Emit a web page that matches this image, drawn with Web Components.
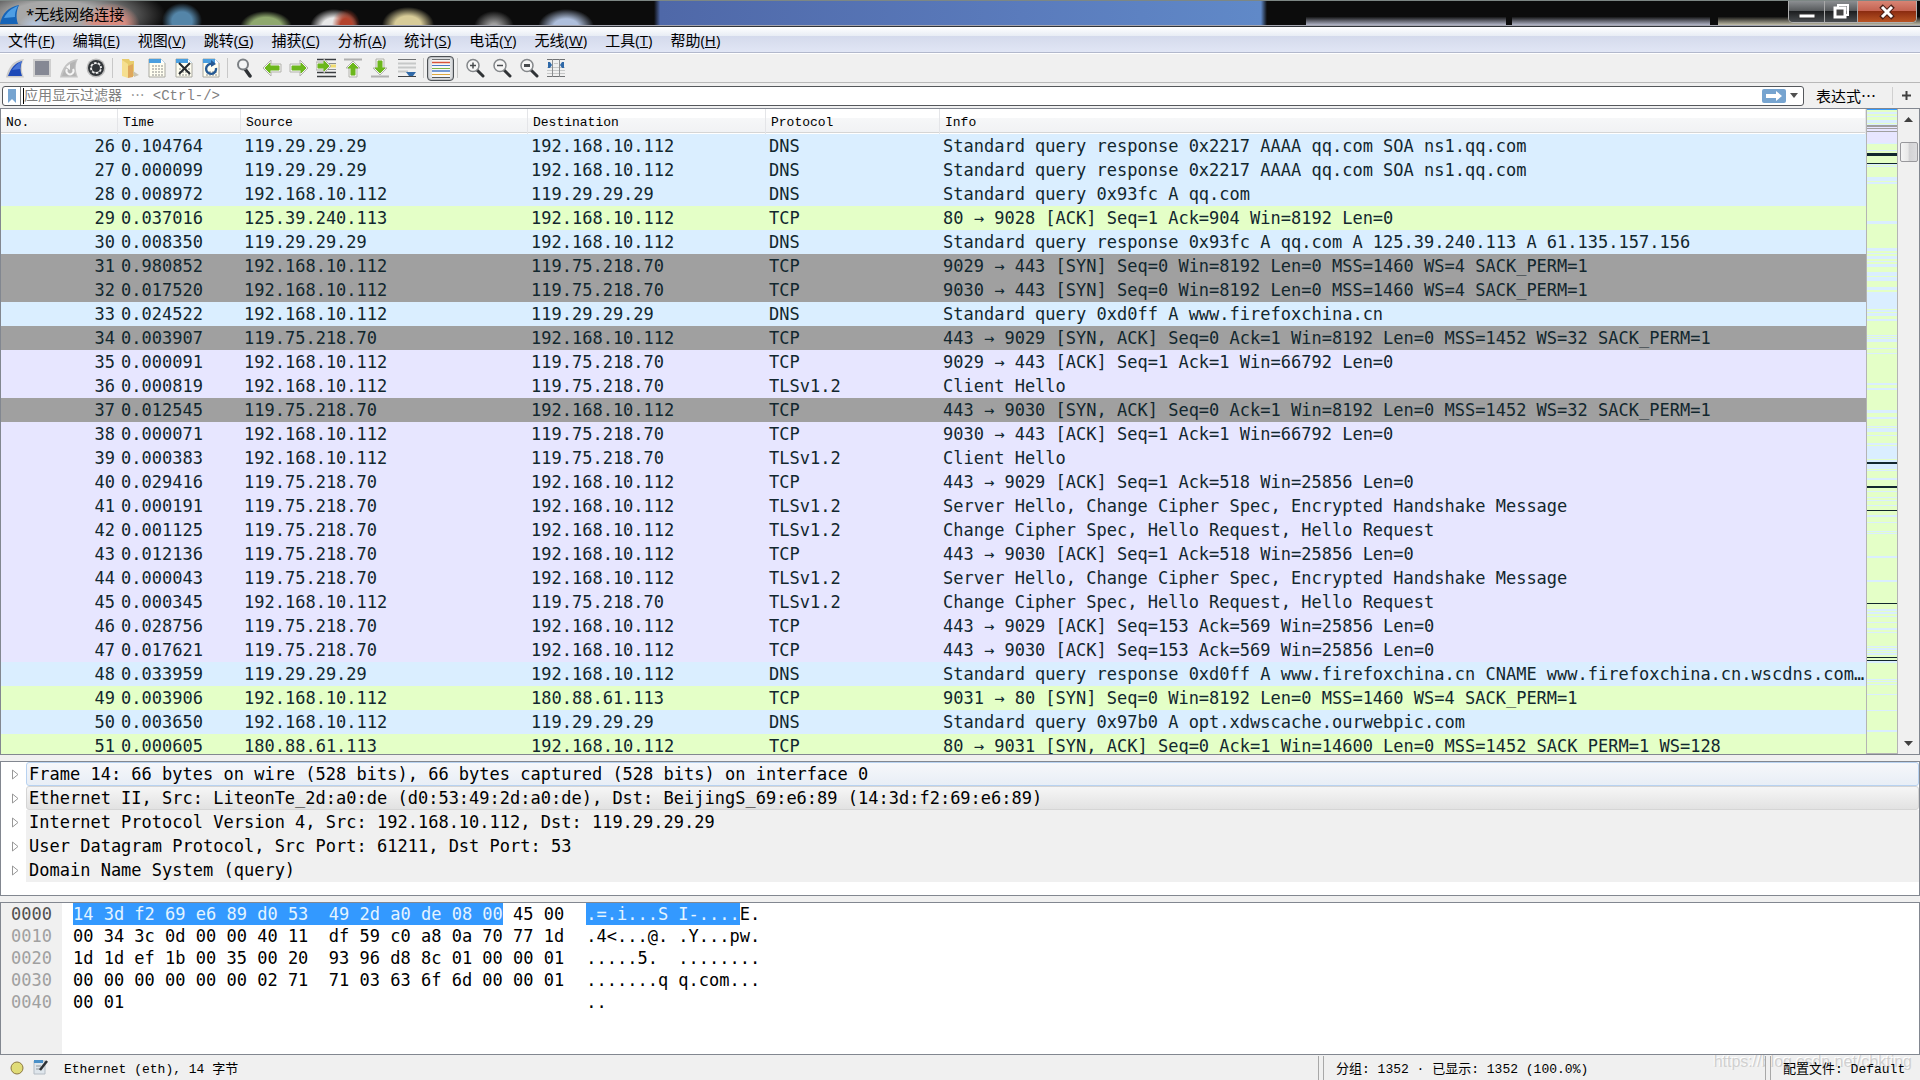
<!DOCTYPE html>
<html lang="zh-CN">
<head>
<meta charset="utf-8">
<title>*无线网络连接</title>
<style>
    html, body {
        height: 100%;
        margin: 0;
    }
    body {
        overflow: hidden;
        background: #f0f0f0;
        color: #000;
        --ui: "Open Sans", "Noto Sans CJK SC", sans-serif;
        --fixed: "Liberation Mono", "Noto Sans CJK SC", monospace;
        --data: "DejaVu Sans Mono", "Noto Sans CJK SC", monospace;
        --edge: #828790;
    }
</style>
</head>
<body>
<app-window>
    <title-bar slot="title">*无线网络连接</title-bar>
    <menu-bar slot="menu"></menu-bar>
    <tool-bar slot="tools"></tool-bar>
    <filter-bar slot="filter"></filter-bar>
    <packet-list></packet-list>
    <packet-details></packet-details>
    <packet-bytes></packet-bytes>
    <status-bar slot="status"></status-bar>
</app-window>

<script>
const ICONS = {
    start: `<path d="M1 19.500C3 10 8 2 19 1c-3 5-3 12 0 18.500z" fill="#c9c9c9"/><path d="M3 18C6 10 10 5 17 3c-2 5-2 10 0 15z" fill="#1c49b8"/><path d="M7 12c3-4 6-7 10-9-2 4-2 6-2 8z" fill="#4876d8"/>`,
    stop: `<path d="M1 1h18v18H1z" fill="#cfcfcf"/><path d="M3 3h14v14H3z" fill="#858894"/>`,
    restart: `<path d="M1 19.500C3 10 8 2 19 1c-3 5-3 12 0 18.500z" fill="#c3c3c3"/><path d="M3 18C6 10 10 5 17 3c-2 5-2 10 0 15z" fill="#b4b4b4"/><path d="M8 11a3.500 3.500 0 1 0 6 0" fill="none" stroke="#f4f4f4" stroke-width="2"/><path d="M11 6v6l-4-3z" fill="#f4f4f4"/>`,
    options: `<circle cx="10" cy="10" r="9.500" fill="#bdbdbd"/><circle cx="10" cy="10" r="8" fill="#303438"/><circle cx="10" cy="10" r="5" fill="none" stroke="#eee" stroke-width="2"/><circle cx="10" cy="10" r="5.500" fill="none" stroke="#303438" stroke-width="2" stroke-dasharray="1.500 2.800"/><circle cx="10" cy="10" r="2.500" fill="#303438"/>`,
    open: `<path d="M2 1h7l1 2h4v15H2z" fill="#e8cc6c"/><path d="M2 18V2l6 4v14z" fill="#f5df90"/><path d="M8 20V8l5-2v13z" fill="#dfa75b"/><path d="M13 13l6 4-5 2z" fill="#c9c2b0"/>`,
    save: `<path d="M2 1h12l4 4v14H2z" fill="#fffef0" stroke="#a8a8a0"/><path d="M2 1h12l4 4H2z" fill="#4a9fe0"/><path d="M14 1v4h4z" fill="#fff"/><path d="M5 8h11M5 11h11M5 14h11M5 17h11" stroke="#c4c4bc" stroke-width="2" stroke-dasharray="2 1"/>`,
    close: `<path d="M2 1h12l4 4v14H2z" fill="#fffef0" stroke="#a8a8a0"/><path d="M2 1h12l4 4H2z" fill="#4a9fe0"/><path d="M14 1v4h4z" fill="#fff"/><path d="M5 11h11M5 14h11M5 17h11" stroke="#c4c4bc" stroke-width="2" stroke-dasharray="2 1"/><path d="M5 5l11 11M16 5L5 16" stroke="#262a2e" stroke-width="2"/>`,
    reload: `<path d="M2 1h12l4 4v14H2z" fill="#fffef0" stroke="#a8a8a0"/><path d="M2 1h12l4 4H2z" fill="#4a9fe0"/><path d="M14 1v4h4z" fill="#fff"/><path d="M5 14h11M5 17h11" stroke="#c4c4bc" stroke-width="2" stroke-dasharray="2 1"/><path d="M15 10a5 5 0 1 1-4-4" fill="none" stroke="#255a94" stroke-width="2.400"/><path d="M10 2l5 4-5 3z" fill="#255a94"/>`,
    find: `<path d="M10 11l5 7" stroke="#2f3235" stroke-width="3.500" stroke-linecap="round"/><circle cx="8" cy="6.500" r="5" fill="#f4f5f6" stroke="#7c8084" stroke-width="2"/>`,
    back: `<path d="M1 10l8-8v4h10v8H9v4z" fill="#f2f2f0" stroke="#b4b4ae"/><path d="M3 10l5-5v3h9v4H8v3z" fill="#6cb71c" stroke="#6cb71c"/>`,
    forward: `<path d="M19 10l-8-8v4H1v8h10v4z" fill="#f2f2f0" stroke="#b4b4ae"/><path d="M17 10l-5-5v3H3v4h9v3z" fill="#6cb71c" stroke="#6cb71c"/>`,
    goto: `<path d="M1 1.500h19M1 14.500h19M1 18.500h19" stroke="#3a3d40" stroke-width="1.500"/><path d="M10 5.500h10M12 11.500h8" stroke="#8c8e90"/><path d="M12 8h8" stroke="#f0dc70" stroke-width="3"/><path d="M15 8L8 1v3H0v8h8v3z" fill="#e8e8e4" stroke="#b4b4ae"/><path d="M13 8L8 3v3H2v4h6v3z" fill="#6cb71c" stroke="#6cb71c"/>`,
    first: `<path d="M1 1.500h18" stroke="#b0b0b0" stroke-width="2"/><path d="M10 3l7 7h-3v9H6v-9H3z" fill="#f2f2f0" stroke="#b4b4ae"/><path d="M10 5l5 5h-3v7H8v-7H5z" fill="#6cb71c" stroke="#6cb71c"/>`,
    last: `<path d="M1 18.500h18" stroke="#b0b0b0" stroke-width="2"/><path d="M10 17l7-7h-3V1H6v9H3z" fill="#f2f2f0" stroke="#b4b4ae"/><path d="M10 15l5-5h-3V3H8v7H5z" fill="#6cb71c" stroke="#6cb71c"/>`,
    autoscroll: `<path d="M1 1.500h18" stroke="#707274"/><path d="M1 5.500h18M1 9.500h18M1 13.500h10" stroke="#c6c8c8" stroke-width="2"/><path d="M1 18.500h18" stroke="#404346"/><path d="M9 14h10l-3 4h-4z" fill="#2f69a8"/>`,
    colorize: `<path d="M1 1h18v18H1z" fill="#f8f8f8"/><path d="M1 1.500h18" stroke="#707274"/><path d="M1 4.500h18" stroke="#d8553c" stroke-width="1.500"/><path d="M1 7.500h18" stroke="#4a7bc8"/><path d="M1 10.500h18" stroke="#7eb548"/><path d="M1 13h18" stroke="#4a7bc8" stroke-width="1.500"/><path d="M1 16.500h18" stroke="#e0a83c"/><path d="M1 19.500h18" stroke="#55585a"/>`,
    zoomin: `<path d="M12 12l6 6" stroke="#303336" stroke-width="3" stroke-linecap="round"/><circle cx="8" cy="7.500" r="6" fill="#f6f6f6" stroke="#84878a" stroke-width="1.500"/><path d="M5 7.500h6M8 4.500v6" stroke="#484b4e" stroke-width="1.500"/>`,
    zoomout: `<path d="M12 12l6 6" stroke="#303336" stroke-width="3" stroke-linecap="round"/><circle cx="8" cy="7.500" r="6" fill="#f6f6f6" stroke="#84878a" stroke-width="1.500"/><path d="M5 7.500h6" stroke="#484b4e" stroke-width="1.500"/>`,
    zoomreset: `<path d="M12 12l6 6" stroke="#303336" stroke-width="3" stroke-linecap="round"/><circle cx="8" cy="7.500" r="6" fill="#f6f6f6" stroke="#84878a" stroke-width="1.500"/><path d="M5 7.500h6" stroke="#484b4e" stroke-width="3"/>`,
    resize: `<path d="M1 1.500h18M1 18.500h18" stroke="#707274"/><path d="M1 9.500h18M1 12.500h18M1 15.500h18M8 5.500h4" stroke="#c6c8c8"/><path d="M6.500 1v18M13.500 1v18" stroke="#8c8e90"/><path d="M2 4h2l2 3-2 3H2zM18 4h-2l-2 3 2 3h2z" fill="#2f69a8"/>`
};

class AppWindow extends HTMLElement {
    constructor() {
        super();
        this.attachShadow({ mode: 'open' }).innerHTML = `
        <style>
            :host {
                display: flex;
                flex-direction: column;
                height: 100vh;
                font: 15px/20px var(--ui);
            }
            main {
                flex: 1;
                min-height: 0;
                display: flex;
                flex-direction: column;
                gap: 6px;
            }
        </style>
        <slot name="title"></slot>
        <slot name="menu"></slot>
        <slot name="tools"></slot>
        <slot name="filter"></slot>
        <main><slot></slot></main>
        <slot name="status"></slot>
        `;
    }
}

class TitleBar extends HTMLElement {
    constructor() {
        super();
        this.attachShadow({ mode: 'open' }).innerHTML = `
        <style>
            :host {
                display: flex;
                justify-content: space-between;
                align-items: flex-start;
                box-sizing: border-box;
                height: 27px;
                border-top: 1px solid #7d8784;
                border-bottom: 1px solid #30343a;
                box-shadow: inset 0 -1px #a5a6b0;
                background:
                    radial-gradient(ellipse 18px 14px at 36px 26px, #b9cdea, transparent),
                    radial-gradient(ellipse 30px 22px at 110px 24px, #d98c80 50%, transparent),
                    radial-gradient(ellipse 110px 34px at 56px 14px, #a8a8a8 40%, transparent),
                    radial-gradient(ellipse 20px 18px at 182px 20px, #5485a8 50%, transparent),
                    radial-gradient(ellipse 26px 16px at 266px 26px, #8fa86e 60%, transparent),
                    radial-gradient(ellipse 14px 16px at 346px 24px, #b4432c 40%, transparent),
                    radial-gradient(ellipse 24px 18px at 334px 26px, #e8e8e8 50%, transparent),
                    radial-gradient(ellipse 26px 18px at 408px 24px, #d8cc98 50%, transparent),
                    radial-gradient(ellipse 20px 16px at 494px 26px, #a0a0a0 20%, transparent),
                    radial-gradient(ellipse 28px 18px at 566px 26px, #aebfdc 45%, transparent),
                    linear-gradient(90deg, transparent, #4f68a8 1%, #5a7bbc 60%, #6089c8 99%, transparent) 654px 0 / 613px 100% no-repeat,
                    linear-gradient(transparent 62%, #c4c8dc) 1306px 0 / 200px 100% no-repeat,
                    linear-gradient(transparent 62%, #c4c8dc) 1512px 0 / 198px 100% no-repeat,
                    linear-gradient(transparent 62%, #d8d4bc) 1718px 0 / 202px 100% no-repeat,
                    #0c0c0c;
            }
            .caption {
                display: flex;
                align-items: center;
                gap: 6px;
                height: 25px;
            }
            svg {
                display: block;
            }
            .buttons {
                display: flex;
                margin-right: 3px;
                border: 1px solid #b0b0b0;
                border-top: 0;
                border-radius: 0 0 5px 5px;
                overflow: hidden;
            }
            button {
                width: 36px;
                height: 21px;
                padding: 0;
                border: 0;
                border-right: 1px solid #a8a8a8;
                background: linear-gradient(#8c8f92, #55585a 48%, #1c1e20 50%, #4a4d50);
            }
            button:nth-child(2) {
                width: 33px;
            }
            button:last-child {
                width: 58px;
                border-right: 0;
                background: linear-gradient(#d88474, #c46250 48%, #8c2c10 50%, #b85424);
            }
            button svg {
                margin: auto;
            }
        </style>
        <div class="caption">
            <svg width="20" height="20" viewBox="0 0 20 20"><path d="M0 20C2 10 8 3 19 1c-3 7-3 13-1 19z" fill="#1664b8"/><path d="M4 14C7 8 12 4 18 2c-3 5-3 8-3 11z" fill="#4f9ee4"/></svg>
            <slot></slot>
        </div>
        <div class="buttons">
            <button aria-label="最小化"><svg width="20" height="16"><path d="M2 10h16v4H2z" fill="#fff" stroke="#333"/></svg></button>
            <button aria-label="还原"><svg width="20" height="18"><path d="M7 2h10v10H7z" fill="none" stroke="#fff" stroke-width="2"/><path d="M4 5h10v9H4z" fill="#444" stroke="#fff" stroke-width="3"/></svg></button>
            <button aria-label="关闭"><svg width="20" height="16"><path d="M4 2l12 12M16 2L4 14" stroke="#4a2018" stroke-width="5"/><path d="M5 3l10 10M15 3L5 13" stroke="#fff" stroke-width="3"/></svg></button>
        </div>
        `;
    }
}

class MenuBar extends HTMLElement {
    connectedCallback() {
        const items = ['文件F', '编辑E', '视图V', '跳转G', '捕获C', '分析A', '统计S', '电话Y', '无线W', '工具T', '帮助H'];
        this.attachShadow({ mode: 'open' }).innerHTML = `
        <style>
            :host {
                display: block;
                border-bottom: 1px solid #b2b8cc;
                background: linear-gradient(#fff, #e8edf5 35%, #d4daec 36%, #e1e6f5);
            }
            nav {
                display: flex;
                gap: 2px;
                height: 25px;
            }
            button {
                padding: 0 8px;
                border: 0;
                background: none;
                font: inherit;
                color: inherit;
            }
        </style>
        <nav>${items.map(i => `<button>${i.slice(0, 2)}(<u>${i[2]}</u>)</button>`).join('')}</nav>
        `;
    }
}

class ToolButton extends HTMLElement {
    connectedCallback() {
        this.attachShadow({ mode: 'open' }).innerHTML = `
        <style>
            :host {
                display: block;
            }
            button {
                display: flex;
                align-items: center;
                justify-content: center;
                box-sizing: border-box;
                width: 27px;
                height: 25px;
                padding: 0;
                border: 0;
                background: none;
            }
            :host([pressed]) button {
                border: 1px solid #4c5054;
                border-radius: 4px;
                background: #e0e2e4;
                box-shadow: inset 0 0 2px #70747a;
            }
        </style>
        <button aria-label="${this.getAttribute('icon')}">
            <svg width="20" height="20" viewBox="0 0 20 20">${ICONS[this.getAttribute('icon')]}</svg>
        </button>
        `;
    }
}

class ToolBar extends HTMLElement {
    connectedCallback() {
        const groups = [
            ['start', 'stop', 'restart', 'options'],
            ['open', 'save', 'close', 'reload'],
            ['find', 'back', 'forward', 'goto', 'first', 'last', 'autoscroll'],
            ['colorize'],
            ['zoomin', 'zoomout', 'zoomreset', 'resize']
        ];
        this.attachShadow({ mode: 'open' }).innerHTML = `
        <style>
            :host {
                display: flex;
                align-items: center;
                height: 28px;
                padding-left: 1px;
                border-top: 1px solid #fff;
                border-bottom: 1px solid #b8b8b8;
            }
            i {
                width: 1px;
                height: 20px;
                margin: 0 3px;
                background: #c8c8c8;
            }
        </style>
        ${groups.map(g => g.map(n => `<tool-button icon="${n}"${n === 'colorize' ? ' pressed' : ''}></tool-button>`).join('')).join('<i></i>')}
        `;
    }
}

class FilterBar extends HTMLElement {
    constructor() {
        super();
        this.attachShadow({ mode: 'open' }).innerHTML = `
        <style>
            :host {
                display: flex;
                align-items: center;
                height: 25px;
                padding-left: 2px;
            }
            .box {
                flex: 1;
                display: flex;
                align-items: center;
                box-sizing: border-box;
                height: 20px;
                border: 1px solid #55585c;
                border-radius: 3px;
                background: #fff;
            }
            button {
                display: flex;
                align-items: center;
                justify-content: center;
                padding: 0;
                border: 0;
                background: none;
                font: 15px/20px "Noto Sans CJK SC", sans-serif;
                color: #000;
            }
            .mark {
                width: 18px;
                height: 18px;
                border-right: 1px solid #77797c;
            }
            .caret {
                width: 1px;
                height: 16px;
                margin-left: 2px;
                background: #000;
            }
            input {
                flex: 1;
                min-width: 0;
                height: 18px;
                padding: 0;
                border: 0;
                outline: 0;
                background: none;
                font: 14px/18px var(--fixed);
            }
            input::placeholder {
                color: #808080;
            }
            .apply {
                width: 24px;
                height: 14px;
                border-radius: 2px;
                background: #76a4d0;
            }
            .drop {
                width: 17px;
                height: 18px;
            }
            .expr {
                margin: 0 16px 0 12px;
            }
            .add {
                width: 28px;
                height: 18px;
                border-left: 1px solid #d0d0d0;
            }
        </style>
        <div class="box">
            <button class="mark" aria-label="书签"><svg width="8" height="14"><path d="M0 0h8v14L4 10l-4 4z" fill="#76a4d0"/></svg></button>
            <span class="caret"></span>
            <input aria-label="显示过滤器" placeholder="应用显示过滤器 ⋯ &lt;Ctrl-/&gt;">
            <button class="apply" aria-label="应用"><svg width="18" height="10"><path d="M1 3h10V0l6 5-6 5V7H1z" fill="#fff"/></svg></button>
            <button class="drop" aria-label="最近"><svg width="8" height="5"><path d="M0 0h8L4 5z" fill="#505050"/></svg></button>
        </div>
        <button class="expr">表达式…</button>
        <button class="add" aria-label="添加"><svg width="9" height="9"><path d="M0 4.500h9M4.500 0v9" stroke="#404040" stroke-width="2"/></svg></button>
        `;
    }
}

// [no, time, source, destination, protocol, colour, info]
const HOST = '192.168.10.112';
const PACKETS = [
    [26, '0.104764', '119.29.29.29', HOST, 'DNS', 'dns', 'Standard query response 0x2217 AAAA qq.com SOA ns1.qq.com'],
    [27, '0.000099', '119.29.29.29', HOST, 'DNS', 'dns', 'Standard query response 0x2217 AAAA qq.com SOA ns1.qq.com'],
    [28, '0.008972', HOST, '119.29.29.29', 'DNS', 'dns', 'Standard query 0x93fc A qq.com'],
    [29, '0.037016', '125.39.240.113', HOST, 'TCP', 'http', '80 → 9028 [ACK] Seq=1 Ack=904 Win=8192 Len=0'],
    [30, '0.008350', '119.29.29.29', HOST, 'DNS', 'dns', 'Standard query response 0x93fc A qq.com A 125.39.240.113 A 61.135.157.156'],
    [31, '0.980852', HOST, '119.75.218.70', 'TCP', 'syn', '9029 → 443 [SYN] Seq=0 Win=8192 Len=0 MSS=1460 WS=4 SACK_PERM=1'],
    [32, '0.017520', HOST, '119.75.218.70', 'TCP', 'syn', '9030 → 443 [SYN] Seq=0 Win=8192 Len=0 MSS=1460 WS=4 SACK_PERM=1'],
    [33, '0.024522', HOST, '119.29.29.29', 'DNS', 'dns', 'Standard query 0xd0ff A www.firefoxchina.cn'],
    [34, '0.003907', '119.75.218.70', HOST, 'TCP', 'syn', '443 → 9029 [SYN, ACK] Seq=0 Ack=1 Win=8192 Len=0 MSS=1452 WS=32 SACK_PERM=1'],
    [35, '0.000091', HOST, '119.75.218.70', 'TCP', 'tcp', '9029 → 443 [ACK] Seq=1 Ack=1 Win=66792 Len=0'],
    [36, '0.000819', HOST, '119.75.218.70', 'TLSv1.2', 'tcp', 'Client Hello'],
    [37, '0.012545', '119.75.218.70', HOST, 'TCP', 'syn', '443 → 9030 [SYN, ACK] Seq=0 Ack=1 Win=8192 Len=0 MSS=1452 WS=32 SACK_PERM=1'],
    [38, '0.000071', HOST, '119.75.218.70', 'TCP', 'tcp', '9030 → 443 [ACK] Seq=1 Ack=1 Win=66792 Len=0'],
    [39, '0.000383', HOST, '119.75.218.70', 'TLSv1.2', 'tcp', 'Client Hello'],
    [40, '0.029416', '119.75.218.70', HOST, 'TCP', 'tcp', '443 → 9029 [ACK] Seq=1 Ack=518 Win=25856 Len=0'],
    [41, '0.000191', '119.75.218.70', HOST, 'TLSv1.2', 'tcp', 'Server Hello, Change Cipher Spec, Encrypted Handshake Message'],
    [42, '0.001125', '119.75.218.70', HOST, 'TLSv1.2', 'tcp', 'Change Cipher Spec, Hello Request, Hello Request'],
    [43, '0.012136', '119.75.218.70', HOST, 'TCP', 'tcp', '443 → 9030 [ACK] Seq=1 Ack=518 Win=25856 Len=0'],
    [44, '0.000043', '119.75.218.70', HOST, 'TLSv1.2', 'tcp', 'Server Hello, Change Cipher Spec, Encrypted Handshake Message'],
    [45, '0.000345', HOST, '119.75.218.70', 'TLSv1.2', 'tcp', 'Change Cipher Spec, Hello Request, Hello Request'],
    [46, '0.028756', '119.75.218.70', HOST, 'TCP', 'tcp', '443 → 9029 [ACK] Seq=153 Ack=569 Win=25856 Len=0'],
    [47, '0.017621', '119.75.218.70', HOST, 'TCP', 'tcp', '443 → 9030 [ACK] Seq=153 Ack=569 Win=25856 Len=0'],
    [48, '0.033959', '119.29.29.29', HOST, 'DNS', 'dns', 'Standard query response 0xd0ff A www.firefoxchina.cn CNAME www.firefoxchina.cn.wscdns.com…'],
    [49, '0.003906', HOST, '180.88.61.113', 'TCP', 'http', '9031 → 80 [SYN] Seq=0 Win=8192 Len=0 MSS=1460 WS=4 SACK_PERM=1'],
    [50, '0.003650', HOST, '119.29.29.29', 'DNS', 'dns', 'Standard query 0x97b0 A opt.xdwscache.ourwebpic.com'],
    [51, '0.000605', '180.88.61.113', HOST, 'TCP', 'http', '80 → 9031 [SYN, ACK] Seq=0 Ack=1 Win=14600 Len=0 MSS=1452 SACK_PERM=1 WS=128']
];

class PacketList extends HTMLElement {
    connectedCallback() {
        const rows = PACKETS.map(([no, time, src, dst, proto, kind, info]) =>
            `<tr class="${kind}"><td>${no}</td><td>${time}</td><td>${src}</td><td>${dst}</td><td>${proto}</td><td>${info}</td></tr>`).join('');
        this.attachShadow({ mode: 'open' }).innerHTML = `
        <style>
            :host {
                flex: 1;
                min-height: 0;
                display: flex;
                border: 1px solid var(--edge);
                background: #fff;
            }
            .rows {
                flex: 1;
                min-width: 0;
                overflow: hidden;
            }
            table {
                width: 100%;
                table-layout: fixed;
                border-collapse: collapse;
            }
            thead tr {
                height: 25px;
                background: linear-gradient(#fff 36%, #f6f7f8 37%, #f1f2f4 92%, #d5d5d5 93%, #d5d5d5 96%, #fff 97%);
            }
            th {
                padding: 2px 0 0 5px;
                text-align: left;
                font: 13px/22px var(--fixed);
                box-shadow: inset -1px 0 #e4e5e8;
            }
            td {
                height: 24px;
                padding: 0 3px;
                font: 17px/24px var(--data);
                color: #12272e;
                white-space: nowrap;
                overflow: hidden;
                text-overflow: ellipsis;
            }
            td:first-child {
                text-align: right;
            }
            td:last-child {
                padding-right: 0;
            }
            .dns { background: #daeeff; }
            .http { background: #e4ffc7; }
            .syn { background: #a0a0a0; }
            .tcp { background: #e7e6ff; }
        </style>
        <div class="rows">
            <table>
                <colgroup>
                    <col style="width: 117px"><col style="width: 123px"><col style="width: 287px">
                    <col style="width: 238px"><col style="width: 174px"><col>
                </colgroup>
                <thead><tr><th>No.</th><th>Time</th><th>Source</th><th>Destination</th><th>Protocol</th><th>Info</th></tr></thead>
                <tbody>${rows}</tbody>
            </table>
        </div>
        <packet-map></packet-map>
        <scroll-strip></scroll-strip>
        `;
    }
}

// overview strip beside the list, one line per packet or so
class PacketMap extends HTMLElement {
    connectedCallback() {
        const marks = {
            '#3399ff': [[0, 1]],
            '#e7e6ff': [[18, 16]],
            '#a0a0a0': [[16, 2], [19, 1], [22, 1]],
            '#daeeff': [
                [3, 2], [7, 1], [11, 3], [15, 1], [34, 1], [41, 1], [55, 1], [57, 1], [68, 4], [73, 2], [112, 3], [139, 3],
                [144, 1], [147, 3], [152, 1], [155, 3], [163, 4], [168, 4], [178, 3], [183, 17], [201, 2], [204, 3], [210, 2],
                [226, 1], [228, 1], [230, 3], [239, 1], [244, 1], [274, 2], [279, 2], [301, 3], [308, 2], [317, 1], [319, 4],
                [326, 1], [334, 2], [337, 13], [351, 2], [355, 5], [361, 1], [369, 2], [382, 1], [388, 1], [391, 1], [396, 1],
                [406, 2], [413, 1], [422, 1], [424, 1], [447, 2], [471, 2], [500, 2], [503, 2], [507, 1], [513, 1], [519, 2],
                [523, 1], [537, 1], [539, 2], [542, 1], [544, 2], [552, 2], [570, 1], [572, 1], [575, 1], [585, 1], [601, 1], [621, 2]
            ],
            '#12272e': [[44, 3], [54, 1], [353, 2], [377, 2], [401, 1], [494, 1], [548, 1], [551, 1]]
        };
        const paths = Object.entries(marks).map(([fill, list]) =>
            `<path fill="${fill}" d="${list.map(([y, h]) => `M0 ${y}h30v${h}H0z`).join('')}"/>`).join('');
        this.attachShadow({ mode: 'open' }).innerHTML = `
        <style>
            :host {
                display: block;
                width: 30px;
                border: solid #b4b4b4;
                border-width: 0 1px 1px;
                background: #e4ffc7;
            }
            svg {
                display: block;
                width: 100%;
                height: 100%;
            }
        </style>
        <svg viewBox="0 0 30 644" preserveAspectRatio="none" shape-rendering="crispEdges">${paths}</svg>
        `;
    }
}

class ScrollStrip extends HTMLElement {
    constructor() {
        super();
        this.attachShadow({ mode: 'open' }).innerHTML = `
        <style>
            :host {
                display: flex;
                flex-direction: column;
                align-items: center;
                box-sizing: border-box;
                width: 21px;
                padding: 8px 0;
                background: #f0f0f0;
            }
            .thumb {
                box-sizing: border-box;
                width: 18px;
                height: 20px;
                margin: 20px 0 auto;
                border: 1px solid #98989c;
                border-radius: 2px;
                background: linear-gradient(90deg, #f4f4f4, #e8e8e8 45%, #d2d2d4 50%, #dcdcde);
            }
        </style>
        <svg width="9" height="5"><path d="M0 5h9L4.500 0z" fill="#404040"/></svg>
        <div class="thumb"></div>
        <svg width="9" height="5"><path d="M0 0h9L4.500 5z" fill="#404040"/></svg>
        `;
    }
}

class PacketDetails extends HTMLElement {
    connectedCallback() {
        const lines = [
            'Frame 14: 66 bytes on wire (528 bits), 66 bytes captured (528 bits) on interface 0',
            'Ethernet II, Src: LiteonTe_2d:a0:de (d0:53:49:2d:a0:de), Dst: BeijingS_69:e6:89 (14:3d:f2:69:e6:89)',
            'Internet Protocol Version 4, Src: 192.168.10.112, Dst: 119.29.29.29',
            'User Datagram Protocol, Src Port: 61211, Dst Port: 53',
            'Domain Name System (query)'
        ];
        this.attachShadow({ mode: 'open' }).innerHTML = `
        <style>
            :host {
                display: block;
                padding-bottom: 13px;
                border: 1px solid var(--edge);
                background: #fff;
                font: 17px/22px var(--data);
            }
            .line {
                display: flex;
                align-items: center;
            }
            svg {
                flex: none;
                width: 25px;
                height: 11px;
            }
            .text {
                flex: 1;
                padding: 0 2px;
                border: 1px solid #f0f0f0;
                background: #f0f0f0;
                white-space: nowrap;
            }
            .line:nth-of-type(1) .text {
                border-color: #b8d2f0;
                border-radius: 3px;
                background: linear-gradient(#f6f7fa, #e8eef6);
            }
            .line:nth-of-type(2) .text {
                border-color: #d5d5d5;
                border-radius: 3px;
                background: linear-gradient(#f6f6f6, #e2e2e2);
            }
        </style>
        ${lines.map(l => `<div class="line"><svg viewBox="0 0 25 11"><path d="M11.500 1v9L17 5.500z" fill="#fff" stroke="#989898"/></svg><span class="text">${l}</span></div>`).join('')}
        `;
    }
}

class PacketBytes extends HTMLElement {
    connectedCallback() {
        const rows = [
            ['0000', '<mark>14 3d f2 69 e6 89 d0 53  49 2d a0 de 08 00</mark> 45 00', '<mark>.=.i...S I-....</mark>E.'],
            ['0010', '00 34 3c 0d 00 00 40 11  df 59 c0 a8 0a 70 77 1d', '.4&lt;...@. .Y...pw.'],
            ['0020', '1d 1d ef 1b 00 35 00 20  93 96 d8 8c 01 00 00 01', '.....5.  ........'],
            ['0030', '00 00 00 00 00 00 02 71  71 03 63 6f 6d 00 00 01', '.......q q.com...'],
            ['0040', '00 01', '..']
        ];
        const column = n => rows.map(r => `<div>${r[n]}</div>`).join('');
        this.attachShadow({ mode: 'open' }).innerHTML = `
        <style>
            :host {
                display: flex;
                border: 1px solid var(--edge);
                background: #fff;
                font: 17px/22px var(--data);
                white-space: pre;
            }
            section {
                padding-bottom: 41px;
            }
            .offset {
                padding-left: 10px;
                padding-right: 10px;
                background: #f0f0f0;
                color: #a0a0a0;
            }
            .offset div:first-child {
                color: #505050;
            }
            .hex {
                padding-left: 11px;
                padding-right: 22px;
            }
            mark {
                display: inline-block;
                background: #3399ff;
                color: #e4f4ff;
            }
        </style>
        <section class="offset">${column(0)}</section>
        <section class="hex">${column(1)}</section>
        <section>${column(2)}</section>
        `;
    }
}

class StatusBar extends HTMLElement {
    constructor() {
        super();
        this.attachShadow({ mode: 'open' }).innerHTML = `
        <style>
            :host {
                display: flex;
                align-items: center;
                position: relative;
                height: 25px;
                padding: 0 7px 0 10px;
                font: 13px/20px var(--fixed);
            }
            svg {
                margin-right: 9px;
            }
            .info {
                flex: 1;
                padding: 4px 0 0 7px;
            }
            .cell {
                box-sizing: border-box;
                padding: 4px 0 0 12px;
                margin-left: 4px;
                border-left: 1px solid #a8a8a8;
                box-shadow: -4px 0 #f0f0f0, -5px 0 #a8a8a8;
                white-space: nowrap;
            }
            .packets {
                flex: 0 0 443px;
            }
            .profile {
                flex: 0 0 143px;
            }
            .mark {
                position: absolute;
                right: 8px;
                bottom: 7px;
                font: 16px/22px "Liberation Sans", sans-serif;
                color: #d0d0d0;
                text-shadow: -1px -1px #fff;
                z-index: -1;
            }
        </style>
        <svg width="14" height="14"><circle cx="7" cy="7" r="6" fill="#e0dc78" stroke="#8c7840"/></svg>
        <svg width="15" height="15"><path d="M1 1h11v13H1z" fill="#dfe6ec" stroke="#b4bcc4"/><path d="M1 0h9v3H1z" fill="#4a90c8"/><path d="M3 6h5M3 9h4" stroke="#90989e"/><path d="M14 1l-7 9" stroke="#2c3034" stroke-width="2.500"/></svg>
        <span class="info">Ethernet (eth), 14 字节</span>
        <span class="cell packets">分组: 1352 · 已显示: 1352 (100.0%)</span>
        <span class="cell profile">配置文件: Default</span>
        <span class="mark">https://blog.csdn.net/cbkting</span>
        `;
    }
}

customElements.define("app-window", AppWindow);
customElements.define("title-bar", TitleBar);
customElements.define("menu-bar", MenuBar);
customElements.define("tool-button", ToolButton);
customElements.define("tool-bar", ToolBar);
customElements.define("filter-bar", FilterBar);
customElements.define("packet-map", PacketMap);
customElements.define("scroll-strip", ScrollStrip);
customElements.define("packet-list", PacketList);
customElements.define("packet-details", PacketDetails);
customElements.define("packet-bytes", PacketBytes);
customElements.define("status-bar", StatusBar);
</script>
</body>
</html>
